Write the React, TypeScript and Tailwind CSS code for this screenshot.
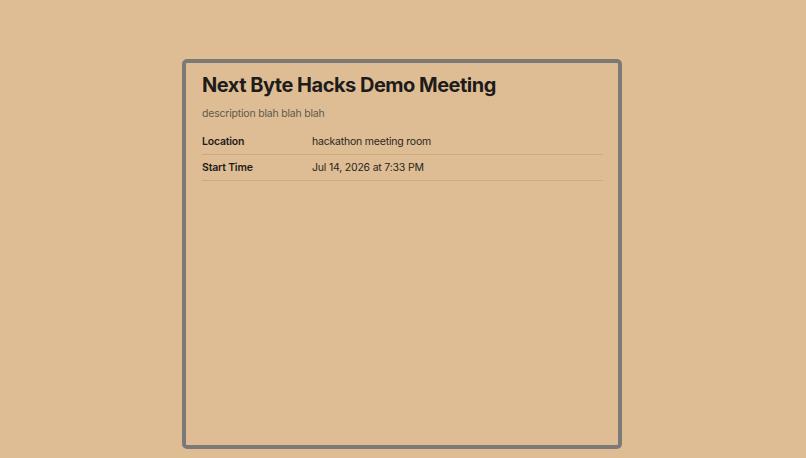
export default function App() {
  return (
    <div className="min-h-[458px] w-full bg-[#dfbd94] flex pl-[182px] pt-[59px]" style={{ fontFamily: 'Inter, "Liberation Sans", sans-serif' }}>
      <div className="w-[440px] h-[390px] border-4 border-[#7c7a77] rounded-[5px] pl-4 pr-[15px] pt-[8px]">
        <h1 className="text-[20px] leading-[28px] font-bold text-[#1e1c1a] tracking-[-0.5px]">Next Byte Hacks Demo Meeting</h1>
        <p className="mt-[7px] text-[10.5px] leading-[16px] text-[#62584d] tracking-[-0.2px]">description blah blah blah</p>
        <div className="mt-[7px] text-[10.5px] tracking-[-0.2px]">
          <div className="flex items-center h-[26px] border-b border-[#cdaa80]">
            <div className="w-[110px] font-semibold text-[#1e1c1a]">Location</div>
            <div className="text-[#2a2622]">hackathon meeting room</div>
          </div>
          <div className="flex items-center h-[26px] border-b border-[#cdaa80]">
            <div className="w-[110px] font-semibold text-[#1e1c1a]">Start Time</div>
            <div className="text-[#2a2622]">Jul 14, 2026 at 7:33 PM</div>
          </div>
        </div>
      </div>
    </div>
  );
}
